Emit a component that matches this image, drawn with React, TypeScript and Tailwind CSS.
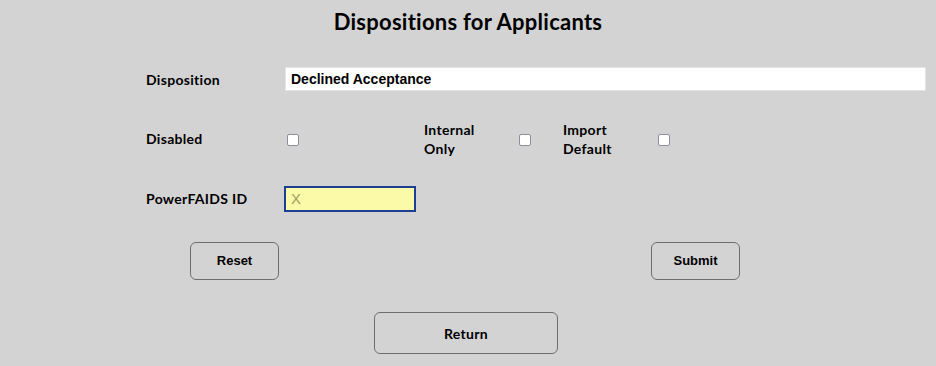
import React from "react";

const geo = { fontFamily: "Lato, 'Open Sans', sans-serif" };
const arial = { fontFamily: "'Liberation Sans', Arial, sans-serif" };

function Box() {
  return (
    <span className="block w-[12px] h-[12px] bg-white border border-[#8f8f9d] rounded-[2px]" />
  );
}

export default function App() {
  return (
    <div className="w-[936px] h-[366px] bg-[#d3d3d3] text-black overflow-hidden" style={geo}>
      <h1 className="pt-[8px] h-[36px] text-center text-[22px] leading-[28px] font-bold tracking-[0.25px]">
        Dispositions for Applicants
      </h1>

      <div className="mt-[31px] flex items-center h-[24px] pl-[146px] pr-[10px]">
        <div className="w-[139px] text-[14px] font-bold tracking-[0.3px]">Disposition</div>
        <div
          className="flex-1 h-[24px] bg-white border border-[#e4e4e4] flex items-center pl-[5px] text-[14px] font-bold"
          style={arial}
        >
          Declined Acceptance
        </div>
      </div>

      <div className="mt-[29px] flex items-center h-[40px] pl-[146px]">
        <div className="w-[139px] text-[14px] font-bold tracking-[0.3px] -mt-[3px]">Disabled</div>
        <div className="w-[139px] pl-[2px]">
          <Box />
        </div>
        <div className="w-[95px] text-[14px] font-bold leading-[19px] tracking-[0.3px] -mt-[2px]">
          Internal
          <br />
          Only
        </div>
        <div className="w-[44px]">
          <Box />
        </div>
        <div className="w-[95px] text-[14px] font-bold leading-[19px] tracking-[0.3px] -mt-[2px]">
          Import
          <br />
          Default
        </div>
        <div>
          <Box />
        </div>
      </div>

      <div className="mt-[26px] flex items-center h-[26px] pl-[146px]">
        <div className="w-[138px] text-[14px] font-bold tracking-[0.3px] -mt-[2px]">PowerFAIDS ID</div>
        <div
          className="w-[132px] h-[26px] bg-[#fafaa8] border-2 border-[#1c3f94] flex items-center pl-[5px] text-[15px] text-[#a0a060]"
          style={arial}
        >
          X
        </div>
      </div>

      <div className="mt-[30px] flex h-[38px]">
        <button
          className="ml-[190px] w-[89px] h-[38px] border border-[#6e6e6e] rounded-[6px] text-[13px] font-bold bg-transparent"
          style={arial}
        >
          Reset
        </button>
        <button
          className="ml-[372px] w-[89px] h-[38px] border border-[#6e6e6e] rounded-[6px] text-[13px] font-bold bg-transparent"
          style={arial}
        >
          Submit
        </button>
      </div>

      <div className="mt-[32px] flex">
        <button className="ml-[374px] w-[184px] h-[42px] border border-[#6e6e6e] rounded-[6px] text-[14px] font-bold tracking-[0.3px] bg-transparent">
          Return
        </button>
      </div>
    </div>
  );
}
